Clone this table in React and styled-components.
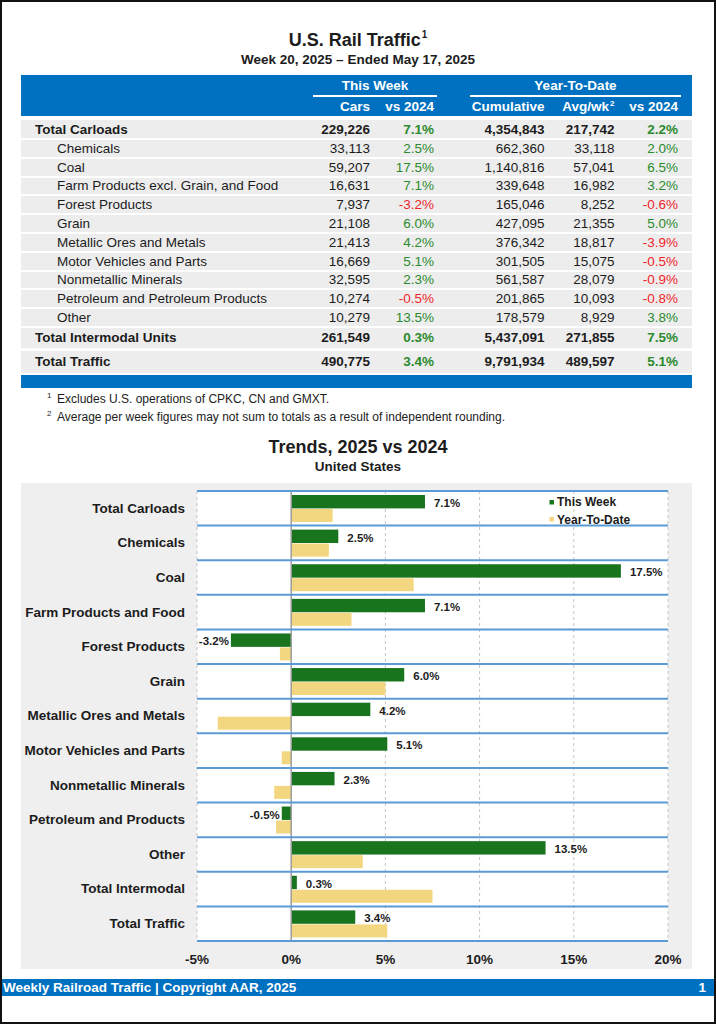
import React from "react";
import styled, { createGlobalStyle } from "styled-components";

const GlobalStyle = createGlobalStyle`
  html, body {
    margin: 0;
    padding: 0;
    background: #fff;
  }
  body {
    font-family: "Liberation Sans", Arial, sans-serif;
    color: #1c1c1c;
  }
`;

const BLUE = "#0070c0";
const GREEN_TEXT = "#2b8a2d";
const RED_TEXT = "#f0262b";
const BAR_GREEN = "#19741e";
const BAR_TAN = "#f2d780";
const COLS = "292px 60px 64px 33px 77.5px 70px 63.5px 11px";

const Page = styled.div`
  width: 716px;
  height: 1024px;
  box-sizing: border-box;
  border: 2px solid #111;
  display: flex;
  flex-direction: column;
`;

const Heading = styled.div`
  text-align: center;
  font-weight: bold;
  font-size: 18px;
  line-height: 22px;
  margin-top: ${p => p.$top}px;
`;

const SubHeading = styled.div`
  text-align: center;
  font-weight: bold;
  font-size: 13.5px;
  line-height: 16px;
  margin-top: 1px;
`;

const Sup = styled.sup`
  font-size: ${p => p.$size || 10}px;
  line-height: 0;
  vertical-align: ${p => p.$lift || 8}px;
  margin-left: 1px;
`;

const TableWrap = styled.div`
  margin: 7px 22px 0 19px;
`;

const HeadBlock = styled.div`
  background: ${BLUE};
  color: #fff;
  font-weight: bold;
  font-size: 13.5px;
`;

const HeadRow = styled.div`
  display: grid;
  grid-template-columns: ${COLS};
  height: ${p => p.$h}px;
  align-items: center;
`;

const Group = styled.div`
  grid-column: ${p => p.$span};
  height: 100%;
  box-sizing: border-box;
  border-bottom: 2px solid #fff;
  display: flex;
  align-items: center;
  justify-content: center;
`;

const HeadCell = styled.div`
  grid-column: ${p => p.$col};
  text-align: right;
  padding-right: 3px;
  white-space: nowrap;
`;

const Row = styled.div`
  display: grid;
  grid-template-columns: ${COLS};
  align-items: center;
  background: #ededed;
  height: ${p => p.$h}px;
  margin-top: ${p => p.$mt}px;
  font-size: 13.5px;
  font-weight: ${p => (p.$bold ? "bold" : "normal")};
  color: #1c1c1c;
`;

const Label = styled.div`
  padding-left: ${p => p.$indent}px;
  white-space: nowrap;
`;

const Cell = styled.div`
  grid-column: ${p => p.$col};
  text-align: right;
  padding-right: 3px;
  color: ${p => p.$tone || "inherit"};
  white-space: nowrap;
`;

const BlueBar = styled.div`
  background: ${BLUE};
  height: 13px;
  margin-top: 2px;
`;

const Notes = styled.div`
  margin-top: 2px;
  padding-left: 45px;
  font-size: 12px;
  line-height: 18px;
`;

const Note = styled.div`
  display: flex;
`;

const NoteMark = styled.span`
  width: 10px;
  font-size: 8px;
  line-height: 12px;
`;

const Panel = styled.div`
  margin: 8px 22px 0 19px;
  background: #efefef;
  padding: 7px 0 1px;
`;

const ChartBody = styled.div`
  display: grid;
  grid-template-columns: 175px 480px;
`;

const Categories = styled.div`
  display: grid;
  grid-template-rows: repeat(13, 34.615px);
  padding-top: 1px;
`;

const Category = styled.div`
  display: flex;
  align-items: center;
  justify-content: flex-end;
  padding-right: 11px;
  font-weight: bold;
  font-size: 13.5px;
  color: #1c1c1c;
  white-space: nowrap;
`;

const Plot = styled.svg`
  display: block;
  overflow: visible;
`;

const AxisRow = styled.div`
  display: grid;
  grid-template-columns: 176px 471px;
  padding-top: 10px;
  line-height: 16px;
  font-weight: bold;
  font-size: 13.5px;
`;

const TickTrack = styled.div`
  grid-column: 2;
  display: flex;
  justify-content: space-between;
`;

const Tick = styled.span`
  width: 0;
  display: flex;
  justify-content: center;
  white-space: nowrap;
`;

const Footer = styled.div`
  margin-top: 10px;
  height: 17px;
  line-height: 17px;
  background: ${BLUE};
  color: #fff;
  font-weight: bold;
  font-size: 13.5px;
  display: flex;
  justify-content: space-between;
  padding: 0 8px 0 1px;
`;

const tableRows = [
  { label: "Total Carloads", bold: true, h: 18, mt: 4, cars: "229,226", wk: 7.1, cum: "4,354,843", avg: "217,742", ytd: 2.2 },
  { label: "Chemicals", cars: "33,113", wk: 2.5, cum: "662,360", avg: "33,118", ytd: 2.0 },
  { label: "Coal", cars: "59,207", wk: 17.5, cum: "1,140,816", avg: "57,041", ytd: 6.5 },
  { label: "Farm Products excl. Grain, and Food", cars: "16,631", wk: 7.1, cum: "339,648", avg: "16,982", ytd: 3.2 },
  { label: "Forest Products", cars: "7,937", wk: -3.2, cum: "165,046", avg: "8,252", ytd: -0.6 },
  { label: "Grain", cars: "21,108", wk: 6.0, cum: "427,095", avg: "21,355", ytd: 5.0 },
  { label: "Metallic Ores and Metals", cars: "21,413", wk: 4.2, cum: "376,342", avg: "18,817", ytd: -3.9 },
  { label: "Motor Vehicles and Parts", cars: "16,669", wk: 5.1, cum: "301,505", avg: "15,075", ytd: -0.5 },
  { label: "Nonmetallic Minerals", cars: "32,595", wk: 2.3, cum: "561,587", avg: "28,079", ytd: -0.9 },
  { label: "Petroleum and Petroleum Products", cars: "10,274", wk: -0.5, cum: "201,865", avg: "10,093", ytd: -0.8 },
  { label: "Other", cars: "10,279", wk: 13.5, cum: "178,579", avg: "8,929", ytd: 3.8 },
  { label: "Total Intermodal Units", bold: true, h: 20, mt: 2, cars: "261,549", wk: 0.3, cum: "5,437,091", avg: "271,855", ytd: 7.5 },
  { label: "Total Traffic", bold: true, h: 22, mt: 3, cars: "490,775", wk: 3.4, cum: "9,791,934", avg: "489,597", ytd: 5.1 },
];

const chartRows = [
  ["Total Carloads", 7.1, 2.2],
  ["Chemicals", 2.5, 2.0],
  ["Coal", 17.5, 6.5],
  ["Farm Products and Food", 7.1, 3.2],
  ["Forest Products", -3.2, -0.6],
  ["Grain", 6.0, 5.0],
  ["Metallic Ores and Metals", 4.2, -3.9],
  ["Motor Vehicles and Parts", 5.1, -0.5],
  ["Nonmetallic Minerals", 2.3, -0.9],
  ["Petroleum and Products", -0.5, -0.8],
  ["Other", 13.5, 3.8],
  ["Total Intermodal", 0.3, 7.5],
  ["Total Traffic", 3.4, 5.1],
];

const pct = v => `${v.toFixed(1)}%`;
const tone = v => (v < 0 ? RED_TEXT : GREEN_TEXT);

// chart geometry (svg units = px)
const PX = 18.84;
const LEFT = 1;
const ZERO = LEFT + 5 * PX;
const RIGHT = LEFT + 25 * PX;
const ROW = 34.615;
const xOf = v => ZERO + v * PX;

function TrendPlot() {
  const height = 1 + 13 * ROW + 1;
  return (
    <Plot width="480" height={height}>
      <rect x={LEFT} y="1" width={RIGHT - LEFT} height={13 * ROW} fill="#fff" />
      {[0, 2, 3, 4, 5].map(k => (
        <line
          key={k}
          x1={LEFT + k * 5 * PX}
          x2={LEFT + k * 5 * PX}
          y1="1"
          y2={1 + 13 * ROW}
          stroke="#c4c4c4"
          strokeWidth="1"
          strokeDasharray="3 3"
        />
      ))}
      {chartRows.map(([name, wk, ytd], i) => {
        const top = 1 + i * ROW;
        const wx = Math.min(xOf(0), xOf(wk));
        const yx = Math.min(xOf(0), xOf(ytd));
        return (
          <g key={name}>
            <rect x={wx} y={top + 4} width={Math.abs(wk) * PX} height="13.4" fill={BAR_GREEN} />
            <rect x={yx} y={top + 18} width={Math.abs(ytd) * PX} height="13" fill={BAR_TAN} />
            <text
              x={wk < 0 ? xOf(wk) - 2 : xOf(wk) + 9}
              y={top + 12}
              textAnchor={wk < 0 ? "end" : "start"}
              dominantBaseline="central"
              fontFamily="Liberation Sans, Arial, sans-serif"
              fontWeight="bold"
              fontSize="11.5"
              fill="#1c1c1c"
            >
              {pct(wk)}
            </text>
          </g>
        );
      })}
      <line x1={ZERO} x2={ZERO} y1="1" y2={1 + 13 * ROW} stroke="#9c9c9c" strokeWidth="1.5" />
      {Array.from({ length: 14 }, (_, i) => (
        <line key={i} x1={LEFT} x2={RIGHT} y1={1 + i * ROW} y2={1 + i * ROW} stroke="#5b9bd5" strokeWidth="2" />
      ))}
      <g fontFamily="Liberation Sans, Arial, sans-serif" fontWeight="bold" fontSize="12" fill="#1c1c1c">
        <rect x="353.5" y="10" width="4.5" height="4.5" fill={BAR_GREEN} />
        <text x="361" y="12" dominantBaseline="central">This Week</text>
        <rect x="353.5" y="27" width="4.5" height="4.5" fill={BAR_TAN} />
        <text x="361" y="29.5" dominantBaseline="central">Year-To-Date</text>
      </g>
    </Plot>
  );
}

export default function App() {
  return (
    <>
      <GlobalStyle />
      <Page>
        <Heading $top={27}>
          U.S. Rail Traffic<Sup>1</Sup>
        </Heading>
        <SubHeading>Week 20, 2025 – Ended May 17, 2025</SubHeading>

        <TableWrap>
          <HeadBlock>
            <HeadRow $h={22}>
              <Group $span="2 / 4">This Week</Group>
              <Group $span="5 / 8">Year-To-Date</Group>
            </HeadRow>
            <HeadRow $h={19}>
              <HeadCell $col={2}>Cars</HeadCell>
              <HeadCell $col={3}>vs 2024</HeadCell>
              <HeadCell $col={5}>Cumulative</HeadCell>
              <HeadCell $col={6}>
                Avg/wk<Sup $size={8} $lift={5}>2</Sup>
              </HeadCell>
              <HeadCell $col={7}>vs 2024</HeadCell>
            </HeadRow>
          </HeadBlock>

          {tableRows.map(r => (
            <Row key={r.label} $bold={r.bold} $h={r.h || 16.8} $mt={r.mt || 2}>
              <Label $indent={r.bold ? 14 : 36}>{r.label}</Label>
              <Cell $col={2}>{r.cars}</Cell>
              <Cell $col={3} $tone={tone(r.wk)}>{pct(r.wk)}</Cell>
              <Cell $col={5}>{r.cum}</Cell>
              <Cell $col={6}>{r.avg}</Cell>
              <Cell $col={7} $tone={tone(r.ytd)}>{pct(r.ytd)}</Cell>
            </Row>
          ))}
          <BlueBar />
        </TableWrap>

        <Notes>
          <Note>
            <NoteMark>1</NoteMark>
            <span>Excludes U.S. operations of CPKC, CN and GMXT.</span>
          </Note>
          <Note>
            <NoteMark>2</NoteMark>
            <span>Average per week figures may not sum to totals as a result of independent rounding.</span>
          </Note>
        </Notes>

        <Heading $top={10}>Trends, 2025 vs 2024</Heading>
        <SubHeading>United States</SubHeading>

        <Panel>
          <ChartBody>
            <Categories>
              {chartRows.map(([name]) => (
                <Category key={name}>{name}</Category>
              ))}
            </Categories>
            <TrendPlot />
          </ChartBody>
          <AxisRow>
            <TickTrack>
              {["-5%", "0%", "5%", "10%", "15%", "20%"].map(t => (
                <Tick key={t}>{t}</Tick>
              ))}
            </TickTrack>
          </AxisRow>
        </Panel>

        <Footer>
          <span>Weekly Railroad Traffic | Copyright AAR, 2025</span>
          <span>1</span>
        </Footer>
      </Page>
    </>
  );
}
